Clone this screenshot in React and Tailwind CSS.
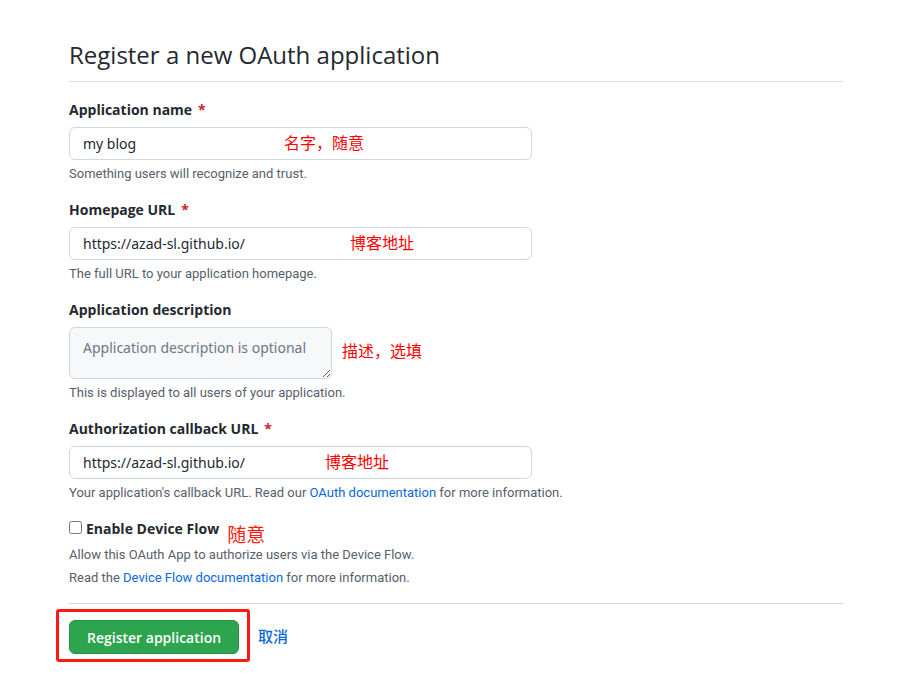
function Required() {
  return <span className="ml-1.5 text-[#cf222e]">*</span>;
}

const inputClass =
  "block h-[33px] w-full rounded-md border border-[#d0d7de] bg-white px-[13px] font-['Noto_Sans',sans-serif] text-[14px] text-[#24292f] outline-none";
const labelClass = "block text-[14px] leading-5 font-bold text-[#24292f]";
const noteClass = "mt-1 font-['Roboto',sans-serif] text-[13px] leading-5 text-[#57606a]";
const remarkClass =
  "pointer-events-none text-[16px] leading-[22px] text-[#ff0000] font-['Noto_Sans_CJK_SC',sans-serif]";

function TextField({ id, label, value, remark, remarkPlace, children }) {
  return (
    <div className="mb-4">
      <label htmlFor={id} className={labelClass}>
        {label}
        <Required />
      </label>
      <div className="relative mt-[7px] max-w-[463px]">
        <input id={id} type="text" defaultValue={value} className={inputClass} />
        <span className={`absolute top-1 ${remarkPlace} ${remarkClass}`}>{remark}</span>
      </div>
      <p className={noteClass}>{children}</p>
    </div>
  );
}

export default function App() {
  return (
    <main className="mr-[73px] ml-[69px] bg-white pt-[35px] font-['Open_Sans','Noto_Sans_CJK_SC',sans-serif] text-[#24292f]">
      <h1 className="border-b border-[#d8dee4] pb-1.5 text-[24px] leading-10">
        Register a new OAuth application
      </h1>
      <form className="pt-[18px]" onSubmit={(event) => event.preventDefault()}>
        <TextField
          id="app-name"
          label="Application name"
          value="my blog"
          remark="名字，随意"
          remarkPlace="left-[215px]"
        >
          Something users will recognize and trust.
        </TextField>
        <TextField
          id="homepage"
          label="Homepage URL"
          value="https://azad-sl.github.io/"
          remark="博客地址"
          remarkPlace="left-[281px]"
        >
          The full URL to your application homepage.
        </TextField>
        <div className="mb-4">
          <label htmlFor="description" className={labelClass}>
            Application description
          </label>
          <div className="mt-[7px] flex items-start gap-2.5">
            <textarea
              id="description"
              placeholder="Application description is optional"
              className="block h-[52px] w-[263px] resize overflow-hidden rounded-md border border-[#d0d7de] bg-[#f6f8fa] px-[13px] py-[9px] font-['Noto_Sans',sans-serif] text-[14px] leading-[22px] outline-none placeholder:text-[#6e7781]"
            />
            <span className={`pt-3 ${remarkClass}`}>描述，选填</span>
          </div>
          <p className={noteClass}>This is displayed to all users of your application.</p>
        </div>
        <TextField
          id="callback"
          label="Authorization callback URL"
          value="https://azad-sl.github.io/"
          remark="博客地址"
          remarkPlace="left-[256px]"
        >
          Your application's callback URL. Read our{" "}
          <a href="#oauth" className="text-[#0969da]">
            OAuth documentation
          </a>{" "}
          for more information.
        </TextField>
        <div className="flex h-6 items-start">
          <input id="device-flow" type="checkbox" className="mt-0.5 size-[13px]" />
          <label htmlFor="device-flow" className={`ml-1 ${labelClass}`}>
            Enable Device Flow
          </label>
          <span className="ml-2 pt-1 font-['Noto_Sans_CJK_SC',sans-serif] text-[19px] leading-[22px] text-[#ff1a0f]">
            随意
          </span>
        </div>
        <p className="font-['Roboto',sans-serif] text-[13px] leading-[23px] text-[#57606a]">
          Allow this OAuth App to authorize users via the Device Flow.
          <br />
          Read the{" "}
          <a href="#device-flow-docs" className="text-[#0969da]">
            Device Flow documentation
          </a>{" "}
          for more information.
        </p>
        <div className="mt-[14px] border-t border-[#d0d7de] pt-[5px]">
          <div className="-ml-[13px] flex items-center gap-2">
            <div className="rounded-[3px] border-[3px] border-[#ff1a0f] pt-2 pr-2 pb-[5px] pl-[10px]">
              <button
                type="submit"
                className="block h-[34px] rounded-md border border-[#2a8f46] bg-[#2da44e] px-[17px] text-[14px] font-semibold text-white"
              >
                Register application
              </button>
            </div>
            <a href="#cancel" className="text-[15px] leading-[22px] font-medium text-[#0969da]">
              取消
            </a>
          </div>
        </div>
      </form>
    </main>
  );
}
